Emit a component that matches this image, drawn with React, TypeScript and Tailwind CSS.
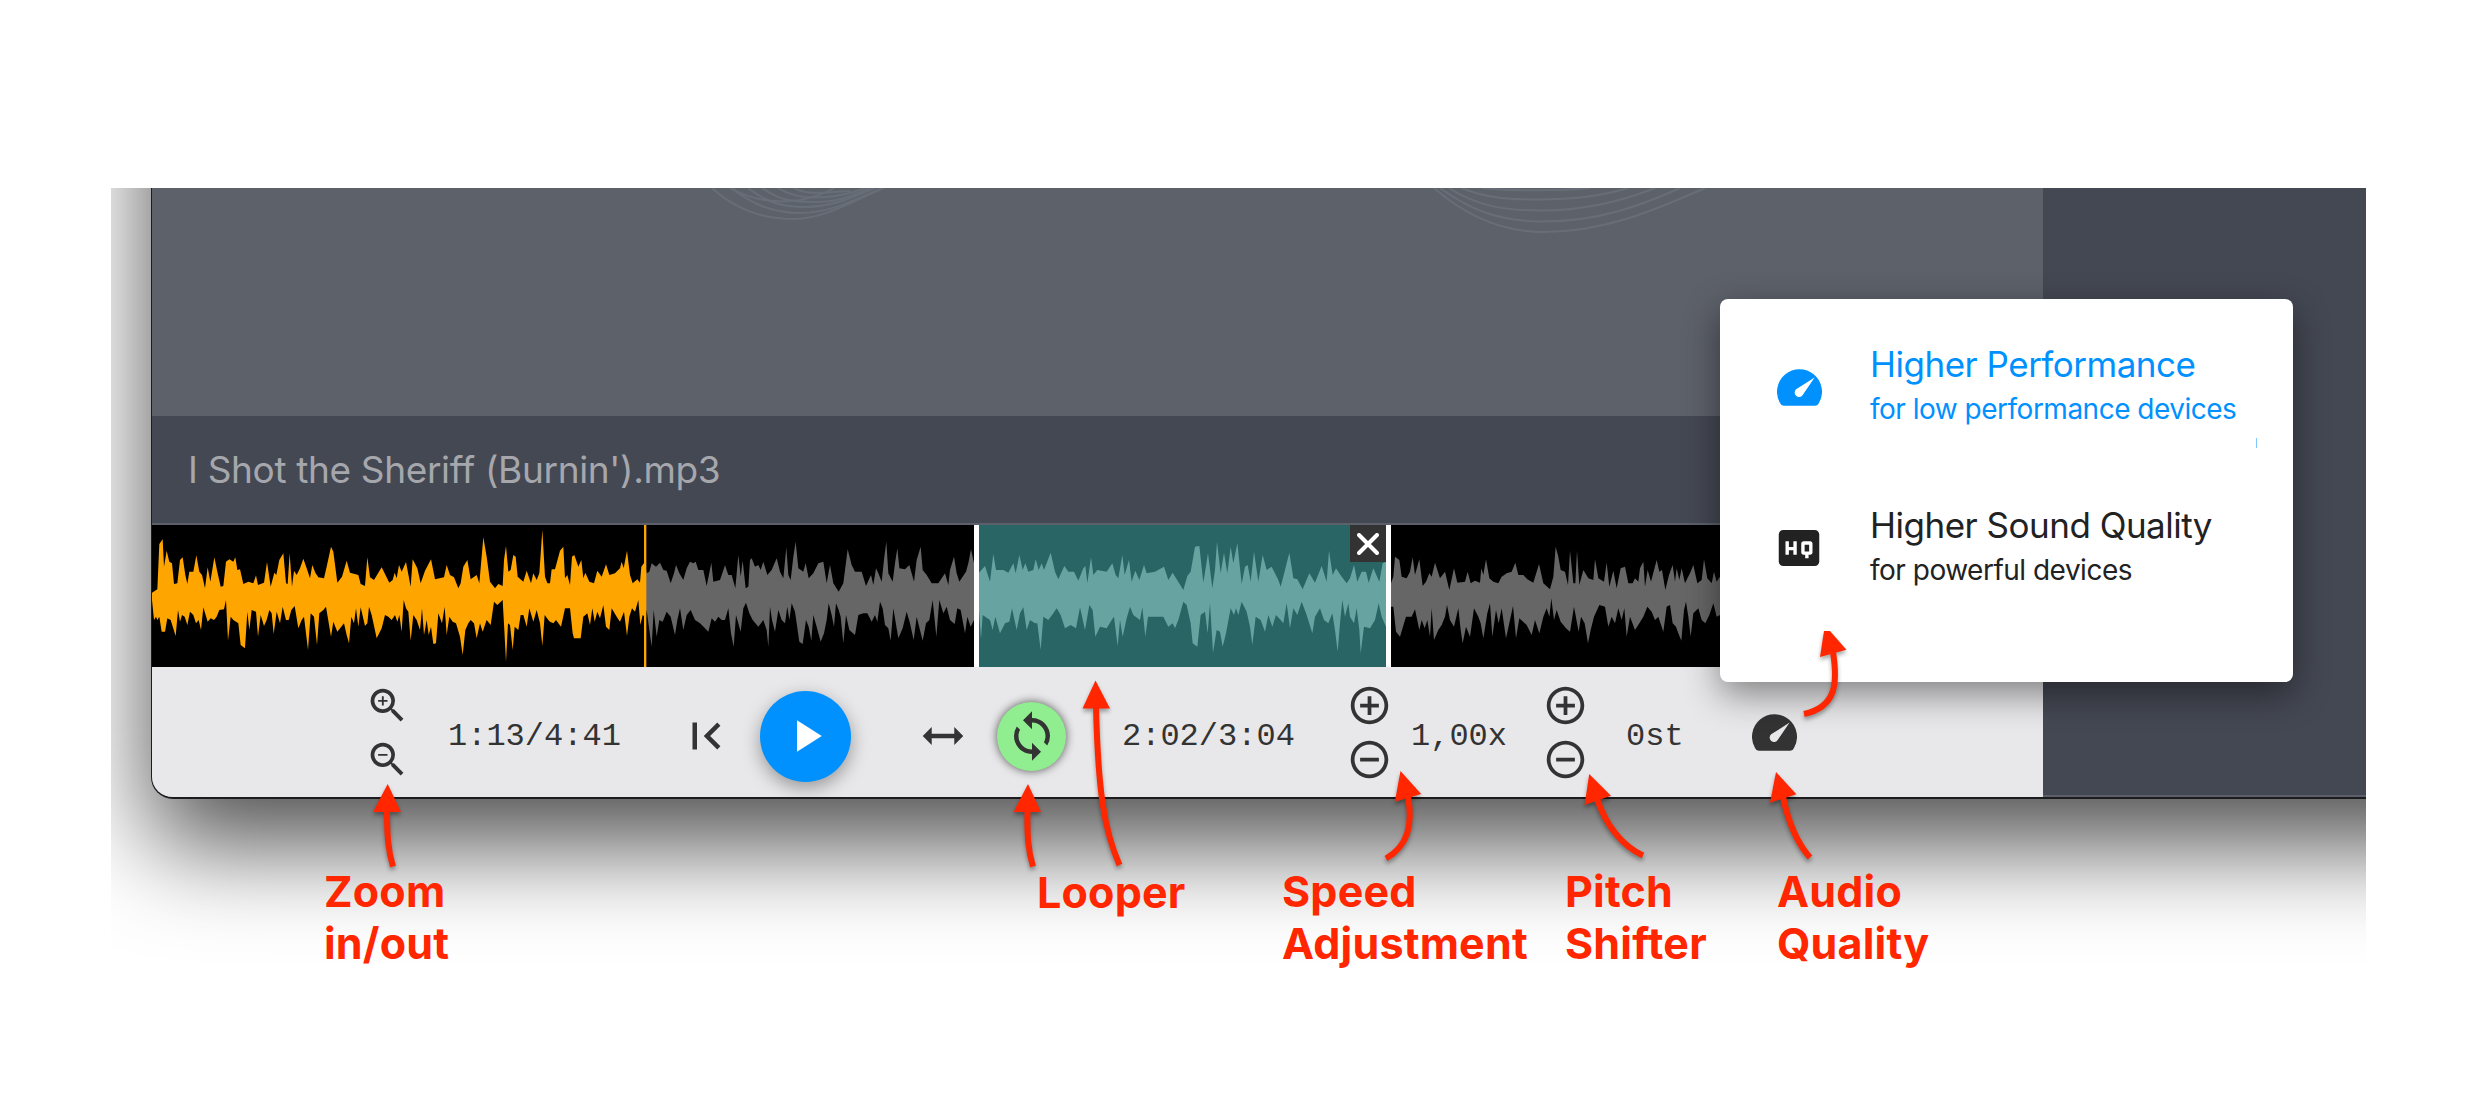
import type { ReactNode } from "react";
import {
  MdAddCircleOutline,
  MdFirstPage,
  MdHeight,
  MdHighQuality,
  MdPlayArrow,
  MdRemoveCircleOutline,
  MdSync,
  MdZoomIn,
  MdZoomOut,
} from "react-icons/md";

// waveform outline, 3 units per pixel, in chunks of 1200 units
const CHUNK = 1200;

const upper = [
  "6,218 22,208 28,72 38,58 42,140 50,92 58,125 66,130 72,192 82,190 90,120 98,112 106,165 112,192 118,155 130,155 139,106 148,155 156,165 165,205 173,142 181,185 193,112 202,155 212,200 220,198 228,125 238,118 250,125 256,112 262,150 270,148 280,192 295,185 310,190 318,166 324,195 342,188 351,126 362,200 373,158 379,165 388,120 400,100 408,190 413,192 419,100 426,200 432,152 440,165 450,145 460,116 470,145 480,175 487,135 496,158 505,172 522,175 530,140 543,80 550,95 562,188 576,170 590,122 600,158 625,165 632,192 645,198 652,112 660,172 672,180 695,142 718,188 728,180 734,158 740,175 747,135 755,155 768,126 782,200 788,118 802,145 812,190 825,152 843,118 855,178 882,172 890,135 900,165 912,172 925,205 932,190 940,140 952,120 962,178 980,165 988,190 1000,52 1010,110 1020,185 1035,205 1045,192 1058,198 1062,120 1068,78 1075,155 1082,150 1090,105 1097,110 1103,170 1120,185 1130,152 1143,190 1150,160 1160,180 1168,160 1177,30 1185,170 1192,190",
  "0,190 5,148 15,148 30,92 40,80 45,175 52,165 60,195 66,110 73,105 85,140 94,120 100,175 106,158 118,185 132,190 142,152 155,170 168,133 178,165 195,160 210,145 215,125 221,145 231,92 240,165 248,190 262,178 270,188 274,140 285,125 290,160 298,155 305,130 318,140 330,128 340,150 350,152 362,190 372,160 378,135 388,160 400,180 410,145 420,125 430,130 437,125 445,150 460,150 470,198 484,128 490,185 510,180 525,136 535,165 545,165 556,205 565,105 572,170 578,122 587,205 595,200 600,120 605,115 615,140 625,135 632,150 640,125 652,165 665,150 680,115 690,155 700,175 709,82 715,165 722,180 730,110 737,65 745,145 760,155 767,130 776,175 790,160 805,130 820,125 830,190 840,135 850,190 866,215 880,190 893,88 905,135 915,155 935,155 948,198 963,165 970,195 978,145 985,160 995,185 1003,110 1009,65 1015,160 1028,185 1035,130 1042,85 1048,145 1065,148 1078,135 1092,185 1100,120 1112,80 1118,150 1130,165 1145,190 1165,190 1185,160 1195,195",
  "0,150 12,110 20,160 28,185 48,155 55,130 63,88 72,130 87,158 105,138 120,185 130,102 138,150 160,150 175,158 190,130 197,160 208,105 218,150 226,130 235,155 250,150 257,118 266,150 275,130 282,150 302,98 315,155 325,178 343,138 355,155 372,155 385,182 400,145 406,138 412,190 423,112 430,165 442,150 470,155 487,130 497,165 505,175 517,105 524,165 537,120 545,185 556,152 568,180 582,135 590,160 615,155 642,140 655,180 668,158 680,178 700,210 712,168 722,155 735,80 748,78 760,188 774,100 787,205 795,150 801,65 812,160 822,98 832,160 842,80 850,130 862,70 875,192 885,140 893,135 902,185 912,95 925,185 938,105 950,150 965,140 985,180 992,200 1005,150 1018,98 1030,175 1042,178 1058,208 1078,160 1095,188 1115,138 1130,185 1137,92 1148,165 1158,145 1175,170 1190,190",
  "0,175 12,135 22,185 35,155 48,155 56,188 70,145 88,185 98,130 108,125 123,190 130,170 135,110 148,120 155,170 170,175 180,155 188,112 195,165 208,118 218,198 228,185 238,160 245,170 255,128 270,175 285,155 298,210 312,145 322,188 345,185 353,155 362,190 375,182 390,188 394,145 400,165 408,118 418,175 430,185 445,190 455,170 470,160 485,155 496,128 505,165 520,165 532,178 550,188 567,132 580,190 600,208 610,170 617,80 625,110 632,150 645,155 654,195 660,92 670,190 676,190 681,92 688,195 700,150 715,175 730,180 735,118 745,175 762,185 770,128 778,200 790,152 800,205 812,145 825,140 835,190 848,190 855,175 865,185 870,145 880,125 885,200 893,150 903,185 920,120 928,155 936,150 946,210 957,165 968,135 975,185 980,145 988,180 995,145 1005,190 1022,155 1030,135 1042,190 1055,180 1062,118 1072,175 1085,190 1092,155 1100,185 1110,170",
];

const lower = [
  "6,240 12,300 18,290 22,300 28,290 35,335 45,335 52,295 62,300 77,348 84,270 90,305 96,285 104,290 112,315 120,275 130,285 138,310 146,300 153,330 160,262 173,305 182,295 192,300 200,290 208,270 222,268 228,240 234,362 242,290 250,300 258,305 265,310 272,375 285,385 292,275 298,330 305,270 318,275 324,350 332,285 342,318 350,300 358,270 365,280 371,342 380,275 390,310 398,260 408,300 416,300 424,270 434,258 445,325 455,300 462,290 474,390 482,280 492,290 501,375 508,280 520,270 528,260 543,350 550,305 562,335 582,310 590,345 597,370 604,290 612,310 618,265 625,320 632,262 645,318 652,310 657,260 665,285 680,355 695,325 705,285 715,290 725,300 735,285 742,305 748,285 755,335 761,240 768,265 775,275 782,362 790,285 800,300 810,330 816,265 822,345 830,300 836,345 843,320 850,372 858,370 865,280 876,310 884,260 890,345 898,290 908,305 918,310 930,350 938,405 946,330 955,310 962,300 972,310 980,355 990,310 998,335 1010,300 1022,315 1032,245 1042,255 1058,240 1063,330 1068,425 1074,310 1080,315 1088,390 1094,320 1105,330 1112,285 1120,285 1130,320 1138,265 1150,305 1160,270 1170,310 1177,378 1184,285 1195,300",
  "0,305 10,310 18,300 33,320 45,265 60,265 68,340 72,355 92,355 100,290 112,280 120,315 127,265 134,305 142,275 150,295 160,255 168,320 178,330 185,265 200,290 210,305 222,275 231,348 238,290 246,265 255,275 265,240 271,315 278,285 285,290 290,270 298,330 305,380 311,270 320,350 328,300 338,305 350,275 362,290 375,345 382,300 390,265 400,330 410,285 422,270 435,300 450,310 465,325 475,335 485,295 495,305 505,290 515,300 525,300 535,265 543,340 551,380 558,285 572,335 580,265 588,248 598,280 608,300 625,320 640,300 650,330 655,380 660,260 666,300 675,335 685,270 695,300 705,310 712,260 718,300 725,250 735,275 748,365 758,372 768,300 776,320 784,362 790,285 800,320 812,365 822,340 830,300 836,250 845,285 852,320 858,250 866,270 872,290 880,370 888,285 898,330 915,345 925,285 940,280 952,280 965,305 975,285 982,305 990,245 998,265 1005,315 1015,325 1022,362 1030,265 1045,355 1058,325 1070,275 1080,310 1091,360 1100,290 1118,362 1128,310 1138,300 1148,240 1159,350 1168,240 1180,280 1190,260",
  "0,300 14,312 22,265 32,270 45,340 52,290 62,320 72,300 87,270 93,358 98,285 112,295 120,300 128,330 136,290 150,340 165,310 178,305 186,265 200,330 210,280 220,262 230,330 240,300 255,310 262,310 272,390 280,290 295,300 310,280 320,265 332,285 345,325 362,315 378,325 390,262 405,330 418,255 428,270 436,350 450,320 470,325 485,300 492,290 503,378 510,300 518,350 530,295 540,260 550,285 570,300 577,262 586,350 594,290 610,290 625,290 640,290 655,320 668,310 675,325 685,300 700,245 710,255 722,310 728,370 742,380 752,285 765,275 773,340 780,250 789,398 800,330 810,335 818,380 828,340 842,265 852,285 858,265 865,285 875,245 890,275 900,320 907,375 917,290 932,300 945,335 955,285 967,320 978,285 992,300 1000,310 1010,250 1020,325 1030,265 1042,285 1055,245 1070,285 1087,340 1095,290 1110,265 1122,300 1135,310 1147,280 1155,330 1163,395 1170,310 1177,240 1185,290 1195,250",
  "0,290 12,310 20,265 28,330 32,400 42,320 60,325 75,300 86,250 95,290 108,320 123,260 130,260 138,335 150,350 168,290 185,290 195,268 208,330 215,300 224,325 232,300 240,350 245,265 252,360 265,330 275,315 285,290 291,255 300,300 312,320 325,265 332,330 338,370 348,320 360,350 372,265 385,290 392,310 400,355 412,280 420,250 427,350 438,270 446,310 455,265 468,355 480,300 489,258 498,355 508,295 530,315 545,345 555,300 568,340 580,290 590,265 598,290 604,235 612,300 620,270 632,305 648,325 660,335 672,260 686,335 693,290 704,310 714,370 722,330 732,290 748,255 765,260 775,320 785,290 795,310 805,265 815,300 823,265 830,350 840,290 855,330 868,310 880,290 892,260 905,275 915,300 925,290 940,335 950,260 960,255 968,310 978,320 985,340 994,362 1002,270 1008,245 1015,290 1022,350 1030,280 1045,265 1055,300 1066,310 1078,285 1090,250 1100,290 1110,285",
];

function toPoints(chunks: string[]) {
  return chunks.flatMap((chunk, i) =>
    chunk.split(" ").map((pair) => {
      const [x, y] = pair.split(",").map(Number);
      return [x + i * CHUNK, y];
    })
  );
}

const outline = [...toPoints(upper), ...toPoints(lower).reverse()]
  .map((p) => p.join(","))
  .join(" ");

const arrows = [
  { head: "387.7,784 373,812 401,812", tail: "M387 810 C387 835 388 850 393 866.5" },
  { head: "1028,784 1013.5,812 1041,812", tail: "M1027.5 810 C1027 835 1028 850 1033 866.5" },
  { head: "1095.5,680.5 1082.5,708.5 1110,708.5", tail: "M1096 706 C1098 790 1104 830 1119.5 865" },
  { head: "1400.5,771 1394.8,801.7 1421.2,794", tail: "M1408 796 C1413 825 1408 846 1386 858.5" },
  { head: "1589.2,774 1584.6,805 1611,795.7", tail: "M1597 799 C1606 825 1622 846 1643 855.5" },
  { head: "1776,772 1770,802.7 1796.4,794.3", tail: "M1783 797 C1789 825 1797 843 1810 857.5" },
  { head: "1824,631 1830,631 1846.4,649.7 1820,657", tail: "M1833 652 C1838 684 1836 707 1804 714" },
];

const labels = [
  { lines: ["Zoom", "in/out"], className: "left-[324px] top-[865px]" },
  { lines: ["Looper"], className: "left-[1037px] top-[866px]" },
  { lines: ["Speed", "Adjustment"], className: "left-[1282px] top-[865px]" },
  { lines: ["Pitch", "Shifter"], className: "left-[1565px] top-[865px]" },
  { lines: ["Audio", "Quality"], className: "left-[1777px] top-[865px]" },
];

function Gauge({ className }: { className: string }) {
  return (
    <svg viewBox="0 0 134 109" className={className} fill="currentColor">
      <path
        fillRule="evenodd"
        d="M20 109 Q12 109 9 101 A67 67 0 1 1 125 101 Q122 109 114 109Z M112 25 L57 60 A13 13 0 1 0 77 76Z"
      />
    </svg>
  );
}

function Readout({ className, children }: { className: string; children: ReactNode }) {
  return (
    <span
      className={`mt-2.5 shrink-0 whitespace-nowrap font-['Liberation_Mono',monospace] text-[32px] leading-10 ${className}`}
    >
      {children}
    </span>
  );
}

function Waveform() {
  return (
    <div className="relative h-[142px] bg-black">
      <svg viewBox="6 15 4704 426" className="block h-[142px] w-[1568px]">
        <defs>
          <linearGradient id="wave" gradientUnits="userSpaceOnUse" x1="0" x2="4800" y1="0" y2="0">
            <stop offset="0.31" stopColor="#ffa500" />
            <stop offset="0.31" stopColor="#666666" />
            <stop offset="0.5165" stopColor="#666666" />
            <stop offset="0.5165" stopColor="#66a3a1" />
            <stop offset="0.7735" stopColor="#66a3a1" />
            <stop offset="0.7735" stopColor="#666666" />
          </linearGradient>
        </defs>
        <rect x="2487" y="15" width="1221" height="426" fill="#286564" />
        <polygon points={outline} fill="url(#wave)" />
        <rect x="1482" y="15" width="7" height="426" fill="#ffa500" />
        <rect x="2472" y="15" width="15" height="426" fill="#fff" />
        <rect x="3708" y="15" width="15" height="426" fill="#fff" />
      </svg>
      <button className="absolute left-[1198px] top-0 flex h-[37px] w-9 items-center justify-center bg-[#333]">
        <svg viewBox="0 0 22 22" className="size-[22px]" stroke="#fff" strokeWidth="4" strokeLinecap="round">
          <path d="M2 2 L20 20 M20 2 L2 20" />
        </svg>
      </button>
    </div>
  );
}

function Toolbar() {
  return (
    <div className="flex h-[130px] items-center bg-[#e8e8ea] text-[#333]">
      <div className="ml-[213px] flex shrink-0 flex-col gap-[9px]">
        <MdZoomIn className="size-[45px]" />
        <MdZoomOut className="size-[45px]" />
      </div>
      <Readout className="ml-[38px] w-[173px]">1:13/4:41</Readout>
      <MdFirstPage className="ml-[58px] mt-2 size-[54px] shrink-0" />
      <button className="ml-[27px] mt-2 flex size-[91px] shrink-0 items-center justify-center rounded-full bg-[#0091ff] text-white shadow-[0_6px_18px_rgba(0,0,0,0.35)]">
        <MdPlayArrow className="size-[54px]" />
      </button>
      <MdHeight className="ml-[65px] mt-2 size-[54px] shrink-0 rotate-90" />
      <button className="ml-[27px] mt-2 flex size-[69px] shrink-0 items-center justify-center rounded-full bg-[#90ee90] shadow-[0_0_10px_rgba(0,0,0,0.65)]">
        <MdSync className="size-[54px]" />
      </button>
      <Readout className="ml-[56px] w-[173px]">2:02/3:04</Readout>
      <div className="ml-[52px] flex shrink-0 flex-col gap-[9px]">
        <MdAddCircleOutline className="size-[45px]" />
        <MdRemoveCircleOutline className="size-[45px]" />
      </div>
      <Readout className="ml-[19px] w-24">1,00x</Readout>
      <div className="ml-[36px] flex shrink-0 flex-col gap-[9px]">
        <MdAddCircleOutline className="size-[45px]" />
        <MdRemoveCircleOutline className="size-[45px]" />
      </div>
      <Readout className="ml-[38px] w-[58px]">0st</Readout>
      <Gauge className="ml-[68px] h-[37px] w-[45px] shrink-0" />
    </div>
  );
}

function Swirls() {
  return (
    <svg viewBox="152 188 1891 228" className="block h-[228px] w-full" fill="none" stroke="#686e77" strokeWidth="2">
      <path d="M712 188 C733 207 760 219 793 219 C822 219 845 205 888 186" />
      <path d="M732 188 C752 205 775 213 800 213 C828 213 848 203 882 188" />
      <path d="M748 188 C766 202 782 207 805 207 C830 207 846 200 875 188" />
      <path d="M762 188 C780 200 790 202 815 202 C835 202 848 198 870 188" />
      <path d="M778 188 C794 198 810 198 826 197 C842 196 852 193 865 188" />
      <path d="M794 188 C808 195 822 193 850 191" />
      <path d="M730 188 C755 202 780 203 800 200 C815 197 828 192 834 188" />
      <path d="M1434 188 C1465 215 1500 232 1543 232 C1605 232 1655 210 1705 188" />
      <path d="M1440 188 C1470 210 1500 221.500 1543 221.500 C1598 221.500 1640 206 1680 188" />
      <path d="M1449 188 C1475 205 1502 210.500 1540 210.500 C1588 210.500 1625 200 1655 188" />
      <path d="M1462 188 C1485 198 1508 199.500 1538 199.500 C1575 199.500 1605 195 1628 188" />
      <path d="M1482 188 C1510 191 1560 191 1590 188" />
    </svg>
  );
}

function QualityMenu() {
  return (
    <div className="absolute left-[1720px] top-[299px] flex h-[383px] w-[573px] flex-col rounded-lg bg-white font-['Inter',sans-serif] shadow-[0_12px_36px_rgba(0,0,0,0.45)]">
      <div className="flex h-[161px] items-start pt-[42px] text-[#0091ff]">
        <Gauge className="ml-[57px] mt-[28px] h-[37px] w-[45px]" />
        <div className="ml-[48px]">
          <p className="whitespace-nowrap text-[35px] leading-[46px] tracking-[-0.5px]">Higher Performance</p>
          <p className="whitespace-nowrap text-[28px] leading-[44px] tracking-[-0.5px]">for low performance devices</p>
        </div>
      </div>
      <div className="flex items-start pt-[42px] text-[#222]">
        <MdHighQuality className="ml-[52px] mt-[19px] size-[54px]" />
        <div className="ml-[44px]">
          <p className="whitespace-nowrap text-[35px] leading-[46px] tracking-[-0.5px]">Higher Sound Quality</p>
          <p className="whitespace-nowrap text-[28px] leading-[44px] tracking-[-0.5px]">for powerful devices</p>
        </div>
      </div>
      <span className="absolute left-[536px] top-[139px] h-2.5 w-px bg-[#0091ff]/50" />
    </div>
  );
}

export default function App() {
  return (
    <main className="relative h-[1108px] w-[2484px] overflow-hidden bg-white pt-[188px]">
      <div className="ml-[111px] h-[790px] w-[2255px] overflow-hidden">
        <div className="-mt-[300px] ml-[40px] flex h-[911px] w-[2500px] overflow-hidden rounded-bl-[22px] border-b-2 border-l border-[#1c1c1e] bg-[#444853] pt-[300px] shadow-[0_44px_100px_rgba(0,0,0,0.7)]">
          <div className="flex w-[1891px] shrink-0 flex-col">
            <div className="h-[228px] bg-[#5d616a]">
              <Swirls />
            </div>
            <div className="flex h-[109px] items-center border-b-2 border-[#5b606b] pl-[36px] font-['Inter',sans-serif] text-[37px] tracking-[-0.35px] text-[#a6a7ad]">
              <span className="whitespace-nowrap">I Shot the Sheriff (Burnin').mp3</span>
            </div>
            <Waveform />
            <Toolbar />
          </div>
          <div className="flex-1 border-b-2 border-[#5b606b]" />
        </div>
      </div>

      <QualityMenu />

      <svg
        viewBox="0 0 2484 1108"
        className="pointer-events-none absolute inset-0 h-full w-full drop-shadow-[0_3px_2px_rgba(0,0,0,0.35)]"
      >
        {arrows.map((a) => (
          <g key={a.head}>
            <path d={a.tail} fill="none" stroke="#ff2600" strokeWidth="6" />
            <polygon points={a.head} fill="#ff2600" />
          </g>
        ))}
      </svg>

      {labels.map((label) => (
        <div
          key={label.lines[0]}
          className={`absolute font-['Inter',sans-serif] text-[43px] leading-[52px] font-bold tracking-[0.2px] text-[#ff2600] ${label.className}`}
        >
          {label.lines.map((line) => (
            <p key={line} className="whitespace-nowrap">{line}</p>
          ))}
        </div>
      ))}
    </main>
  );
}
